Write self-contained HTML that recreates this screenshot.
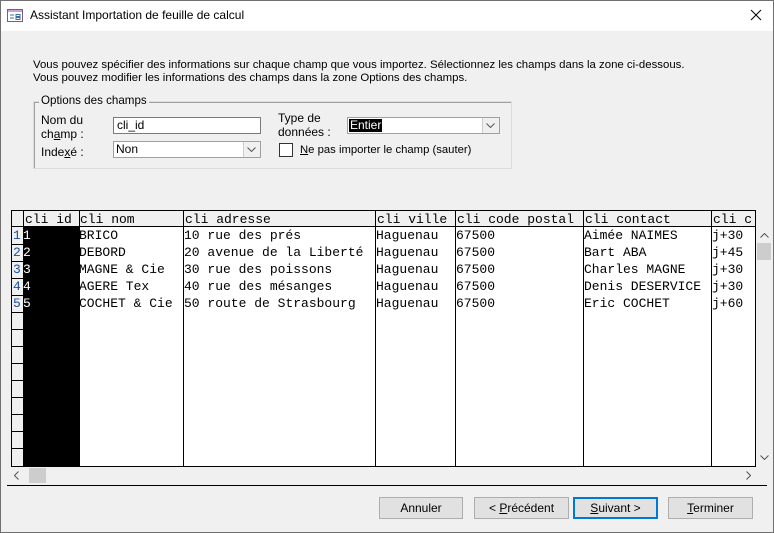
<!DOCTYPE html>
<html><head><meta charset="utf-8"><style>
*{margin:0;padding:0;box-sizing:border-box}
body{width:774px;height:533px;position:relative;background:#f0f0f0;font-family:"Liberation Sans",sans-serif;font-size:12px;color:#000;overflow:hidden}
.a{position:absolute;white-space:nowrap}
.btn{position:absolute;top:497px;height:22px;background:#e1e1e1;border:1px solid #adadad;text-align:center;line-height:20px}
.vl{position:absolute;top:211px;height:255px;width:1px;background:#000}
.hl{position:absolute;left:12px;width:11px;height:1px;background:#000}
.cell{position:absolute;font-family:"Liberation Mono",monospace;font-size:13px;line-height:17px;white-space:nowrap}
</style></head><body>
<div class="a" style="left:0;top:0;width:774px;height:31px;background:#fff"></div>
<div class="a" style="left:0;top:0;width:1px;height:533px;background:#707070"></div>
<div class="a" style="right:0;top:0;width:1px;height:533px;background:#707070"></div>
<div class="a" style="left:0;bottom:0;width:774px;height:1px;background:#707070"></div>
<div class="a" style="left:0;top:0;width:774px;height:1px;background:#707070"></div>
<svg class="a" style="left:7px;top:9px" width="16" height="13"><rect x="0.5" y="0.5" width="15" height="12" fill="#fff" stroke="#7a5a8c"/><rect x="1" y="1" width="14" height="2" fill="#c9a0d8"/><path d="M3 6h4M3 9h4M9 5.5h4v2h-4zM9 8.5h4v2h-4z" stroke="#3a6ea5" fill="none"/></svg>
<div class="a" style="left:30px;top:8px;font-size:12px">Assistant Importation de feuille de calcul</div>
<svg class="a" style="left:750px;top:9px" width="12" height="12"><path d="M1 1L11 11M11 1L1 11" stroke="#000" stroke-width="1"/></svg>

<div class="a" style="left:33px;top:59px;font-size:11.4px">Vous pouvez spécifier des informations sur chaque champ que vous importez. Sélectionnez les champs dans la zone ci-dessous.</div>
<div class="a" style="left:33px;top:72px;font-size:11.4px">Vous pouvez modifier les informations des champs dans la zone Options des champs.</div>

<div class="a" style="left:33px;top:101px;width:479px;height:68px;border:1px solid #dcdcdc;box-shadow:inset 1px 1px 0 #a0a0a0"></div>
<div class="a" style="left:39px;top:94px;background:#f0f0f0;padding:0 2px;font-size:11.6px">Options des champs</div>
<div class="a" style="left:41px;top:113px;line-height:14px">Nom du<br>ch<u>a</u>mp :</div>
<div class="a" style="left:113px;top:117px;width:148px;height:17px;background:#fff;border:1px solid #7a7a7a;padding-left:3px;line-height:15px">cli_id</div>
<div class="a" style="left:41px;top:145px">Inde<u>x</u>é :</div>
<div class="a" style="left:113px;top:141px;width:148px;height:17px;background:#fff;border:1px solid #a0a0a0;padding-left:2px;line-height:14px">Non</div>
<div class="a" style="left:243px;top:142px;width:17px;height:15px;background:#f0f0f0;border-left:1px solid #ccc"></div>
<svg class="a" style="left:247px;top:147px" width="9" height="5"><path d="M0.5 0.5L4.5 4.5L8.5 0.5" stroke="#555" fill="none"/></svg>
<div class="a" style="left:278px;top:111px;line-height:14px">Type de<br>données :</div>
<div class="a" style="left:347px;top:117px;width:153px;height:17px;background:#fff;border:1px solid #a0a0a0"></div>
<div class="a" style="left:349px;top:119px;background:#000;color:#fff;line-height:13px;padding:0 1px">Entier</div>
<div class="a" style="left:482px;top:118px;width:17px;height:15px;background:#f0f0f0;border-left:1px solid #ccc"></div>
<svg class="a" style="left:486px;top:123px" width="9" height="5"><path d="M0.5 0.5L4.5 4.5L8.5 0.5" stroke="#555" fill="none"/></svg>
<div class="a" style="left:279px;top:143px;width:14px;height:14px;background:#fff;border:1px solid #333"></div>
<div class="a" style="left:300px;top:144px;font-size:11.3px"><u>N</u>e pas importer le champ (sauter)</div>

<!-- grid -->
<div class="a" style="left:11px;top:210px;width:745px;height:257px;background:#fff;border:1px solid #000"></div>
<div class="a" style="left:12px;top:211px;width:743px;height:16px;background:#f0f0f0;border-bottom:1px solid #000"></div>
<div class="a" style="left:12px;top:227px;width:11px;height:239px;background:#f0f0f0"></div>
<div class="a" style="left:23px;top:211px;width:56px;height:255px;background:#000"></div>
<div class="a" style="left:23px;top:211px;width:56px;height:16px;background:#f0f0f0;border-bottom:1px solid #000"></div>
<div class="vl" style="left:23px"></div><div class="vl" style="left:79px"></div><div class="vl" style="left:183px"></div><div class="vl" style="left:375px"></div><div class="vl" style="left:455px"></div><div class="vl" style="left:583px"></div><div class="vl" style="left:711px"></div>
<div class="hl" style="top:244px"></div><div class="hl" style="top:261px"></div><div class="hl" style="top:278px"></div><div class="hl" style="top:295px"></div><div class="hl" style="top:312px"></div><div class="hl" style="top:329px"></div><div class="hl" style="top:346px"></div><div class="hl" style="top:363px"></div><div class="hl" style="top:380px"></div><div class="hl" style="top:397px"></div><div class="hl" style="top:414px"></div><div class="hl" style="top:431px"></div><div class="hl" style="top:448px"></div>
<div class="cell" style="left:25px;top:211px">cli id</div>
<div class="cell" style="left:80px;top:211px">cli nom</div>
<div class="cell" style="left:185px;top:211px">cli adresse</div>
<div class="cell" style="left:377px;top:211px">cli ville</div>
<div class="cell" style="left:457px;top:211px">cli code postal</div>
<div class="cell" style="left:585px;top:211px">cli contact</div>
<div class="cell" style="left:713px;top:211px;width:42px;overflow:hidden">cli c</div>
<div class="cell" style="left:13px;top:227px;color:#1a4fa0">1<br>2<br>3<br>4<br>5</div>
<div class="cell" style="left:23px;top:227px;color:#fff">1<br>2<br>3<br>4<br>5</div>
<div class="cell" style="left:79px;top:227px">BRICO<br>DEBORD<br>MAGNE &amp; Cie<br>AGERE Tex<br>COCHET &amp; Cie</div>
<div class="cell" style="left:184px;top:227px">10 rue des prés<br>20 avenue de la Liberté<br>30 rue des poissons<br>40 rue des mésanges<br>50 route de Strasbourg</div>
<div class="cell" style="left:376px;top:227px">Haguenau<br>Haguenau<br>Haguenau<br>Haguenau<br>Haguenau</div>
<div class="cell" style="left:456px;top:227px">67500<br>67500<br>67500<br>67500<br>67500</div>
<div class="cell" style="left:584px;top:227px">Aimée NAIMES<br>Bart ABA<br>Charles MAGNE<br>Denis DESERVICE<br>Eric COCHET</div>
<div class="cell" style="left:712px;top:227px">j+30<br>j+45<br>j+30<br>j+30<br>j+60</div>
<!-- scrollbars -->
<div class="a" style="left:756px;top:227px;width:16px;height:240px;background:#f0f0f0"></div>
<div class="a" style="left:757px;top:243px;width:14px;height:17px;background:#cdcdcd"></div>
<svg class="a" style="left:760px;top:233px" width="9" height="5"><path d="M0.5 4.5L4.5 0.5L8.5 4.5" stroke="#555" fill="none"/></svg>
<svg class="a" style="left:760px;top:455px" width="9" height="5"><path d="M0.5 0.5L4.5 4.5L8.5 0.5" stroke="#555" fill="none"/></svg>
<div class="a" style="left:11px;top:467px;width:745px;height:17px;background:#f0f0f0"></div>
<div class="a" style="left:29px;top:468px;width:17px;height:15px;background:#cdcdcd"></div>
<svg class="a" style="left:14px;top:471px" width="5" height="9"><path d="M4.5 0.5L0.5 4.5L4.5 8.5" stroke="#555" fill="none"/></svg>
<svg class="a" style="left:746px;top:471px" width="5" height="9"><path d="M0.5 0.5L4.5 4.5L0.5 8.5" stroke="#555" fill="none"/></svg>
<div class="a" style="left:7px;top:485px;width:760px;height:1px;background:#000"></div>

<div class="btn" style="left:379px;width:84px">Annuler</div>
<div class="btn" style="left:474px;width:95px">&lt; <u>P</u>récédent</div>
<div class="btn" style="left:573px;width:85px;border:2px solid #0078d7;line-height:18px"><u>S</u>uivant &gt;</div>
<div class="btn" style="left:668px;width:85px"><u>T</u>erminer</div>
</body></html>
